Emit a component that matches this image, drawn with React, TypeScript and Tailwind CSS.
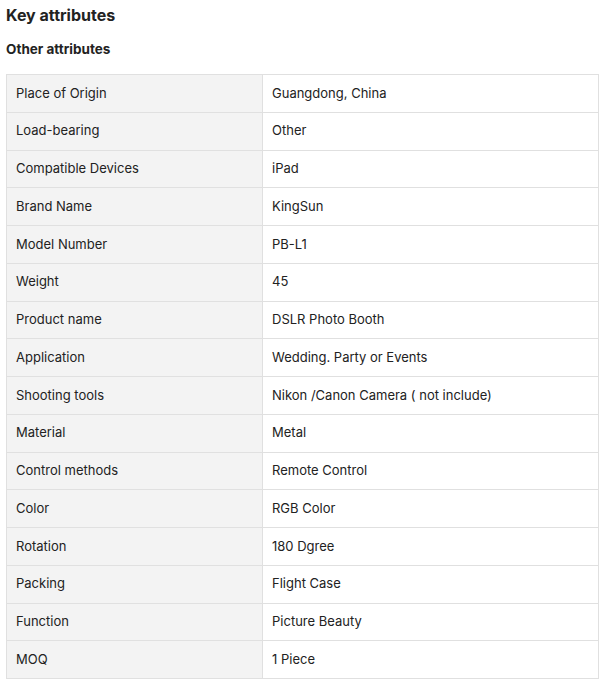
import React from "react";

const rows: [string, string][] = [
  ["Place of Origin", "Guangdong, China"],
  ["Load-bearing", "Other"],
  ["Compatible Devices", "iPad"],
  ["Brand Name", "KingSun"],
  ["Model Number", "PB-L1"],
  ["Weight", "45"],
  ["Product name", "DSLR Photo Booth"],
  ["Application", "Wedding. Party or Events"],
  ["Shooting tools", "Nikon /Canon Camera ( not include)"],
  ["Material", "Metal"],
  ["Control methods", "Remote Control"],
  ["Color", "RGB Color"],
  ["Rotation", "180 Dgree"],
  ["Packing", "Flight Case"],
  ["Function", "Picture Beauty"],
  ["MOQ", "1 Piece"],
];

export default function App() {
  return (
    <div className="w-[614px] h-[693px] bg-white text-[#222] font-['Inter','Liberation_Sans',sans-serif] px-[6px]">
      <div className="h-[29px] flex items-center text-[16px] font-bold">Key attributes</div>
      <div className="h-[38px] flex items-center text-[13.5px] font-bold pt-[2px]">Other attributes</div>
      <div className="mt-[7px] w-[593px] border-t border-l border-[#e0e0e0]">
        {rows.map(([k, v]) => (
          <div key={k} className="flex h-[37.75px] border-b border-[#e0e0e0] text-[13px]">
            <div className="w-[256px] bg-[#f3f3f3] border-r border-[#e0e0e0] flex items-center pl-[9px]">{k}</div>
            <div className="flex-1 border-r border-[#e0e0e0] flex items-center pl-[9px]">{v}</div>
          </div>
        ))}
      </div>
    </div>
  );
}
